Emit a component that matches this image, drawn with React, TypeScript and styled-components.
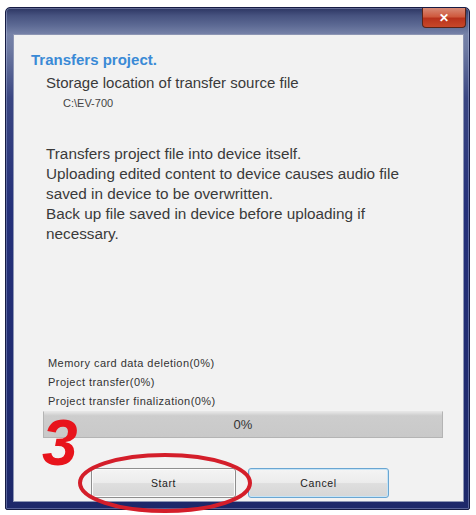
import styled, { createGlobalStyle } from "styled-components";

const GlobalStyle = createGlobalStyle`
  html, body {
    margin: 0;
    padding: 0;
    background: #ffffff;
  }

  body {
    font-family: "Liberation Sans", Arial, sans-serif;
    color: #333333;
  }
`

const Page = styled.div`
  width: 476px;
  height: 515px;
  padding: 7px 6px 0 5px;
  box-sizing: border-box;
`

// frame colour: slate title strip fading into the dark navy side borders
const Window = styled.div`
  position: relative;
  width: 465px;
  height: 503px;
  box-sizing: border-box;
  display: flex;
  flex-direction: column;
  padding: 0 5px 7px 7px;
  border: 1px solid #161c44;
  border-radius: 5px 5px 2px 2px;
  background: linear-gradient(
    to bottom,
    #2c3562 0%,
    #46527f 1.5%,
    #5d6a94 3.5%,
    #7682a8 5.2%,
    #6f7ba3 8%,
    #3a4682 18%,
    #25317a 40%,
    #1d286a 100%
  );
  box-shadow: inset 0 0 0 1px rgba(200, 210, 240, 0.35);
`

const TitleBar = styled.div`
  height: 26px;
  flex-shrink: 0;
  display: flex;
  justify-content: flex-end;
  align-items: flex-start;
`

const CloseButton = styled.div`
  width: 42px;
  height: 19px;
  margin-right: -2px;
  border: 1px solid #5a2418;
  border-top: none;
  border-radius: 0 0 4px 4px;
  display: flex;
  align-items: center;
  justify-content: center;
  color: #ffffff;
  font-size: 12px;
  font-weight: bold;
  background: linear-gradient(to bottom, #d88a76 0%, #cf5a3e 45%, #b8321c 55%, #c8482a 100%);
`

const Client = styled.div`
  flex: 1;
  display: flex;
  flex-direction: column;
  padding: 17px 0 0 17px;
  background: #f2f2f2;
  border: 1px solid #8d96b4;
  box-sizing: border-box;
`

const Heading = styled.div`
  font-size: 15px;
  line-height: 16px;
  font-weight: bold;
  color: #3a8ad6;
`

const Label = styled.div`
  margin: 6px 0 0 15px;
  font-size: 15px;
  line-height: 18px;
  color: #3a3a3a;
`

const FilePath = styled.div`
  margin: 4px 0 0 32px;
  font-size: 11px;
  line-height: 14px;
  color: #444444;
`

const Message = styled.div`
  margin: 34px 0 0 15px;
  font-size: 15.3px;
  line-height: 20px;
  color: #3a3a3a;
`

const Status = styled.div`
  margin: 110px 0 0 17px;
  font-size: 11px;
  line-height: 19px;
  letter-spacing: 0.45px;
  color: #333333;
`

const ProgressBar = styled.div`
  margin: 0 0 0 12px;
  width: 400px;
  height: 27px;
  box-sizing: border-box;
  display: flex;
  align-items: center;
  justify-content: center;
  border: 1px solid #b4b4b4;
  border-top-color: #e6e6e6;
  background: linear-gradient(to bottom, #e4e4e4 0%, #cdcdcd 15%, #c9c9c9 100%);
  font-size: 13px;
  color: #333333;
`

const ButtonRow = styled.div`
  margin: 30px 0 0 60px;
  display: flex;
  gap: 12px;
`

const Button = styled.div<{ $focused?: boolean }>`
  width: ${(p) => (p.$focused ? 141 : 145)}px;
  height: 30px;
  box-sizing: border-box;
  display: flex;
  align-items: center;
  justify-content: center;
  border: 1px solid ${(p) => (p.$focused ? "#6aa6d2" : "#8e8e8e")};
  border-radius: 3px;
  box-shadow: inset 0 0 0 1px ${(p) => (p.$focused ? "#c6e4f6" : "#fbfbfb")};
  background: linear-gradient(to bottom, #f4f4f4 0%, #ececec 48%, #dedede 52%, #d6d6d6 100%);
  font-size: 10.5px;
  letter-spacing: 0.6px;
  color: #222222;
`

const StepNumber = styled.div`
  position: absolute;
  left: 36px;
  top: 403px;
  font-size: 64px;
  line-height: 64px;
  font-weight: bold;
  font-style: italic;
  color: #e8141c;
`

const Highlight = styled.svg`
  position: absolute;
  left: 71px;
  top: 444px;
  overflow: visible;
`

export default function App() {
  return (
    <>
      <GlobalStyle />
      <Page>
        <Window>
          <TitleBar>
            <CloseButton>✕</CloseButton>
          </TitleBar>
          <Client>
            <Heading>Transfers project.</Heading>
            <Label>Storage location of transfer source file</Label>
            <FilePath>C:\EV-700</FilePath>
            <Message>
              Transfers project file into device itself.
              <br />
              Uploading edited content to device causes audio file
              <br />
              saved in device to be overwritten.
              <br />
              Back up file saved in device before uploading if
              <br />
              necessary.
            </Message>
            <Status>
              Memory card data deletion(0%)
              <br />
              Project transfer(0%)
              <br />
              Project transfer finalization(0%)
            </Status>
            <ProgressBar>0%</ProgressBar>
            <ButtonRow>
              <Button>Start</Button>
              <Button $focused>Cancel</Button>
            </ButtonRow>
          </Client>
          <StepNumber>3</StepNumber>
          <Highlight width="176" height="62" viewBox="0 0 176 62">
            <ellipse
              cx="88"
              cy="31"
              rx="85"
              ry="28"
              fill="none"
              stroke="#d41e2a"
              strokeWidth="4"
            />
          </Highlight>
        </Window>
      </Page>
    </>
  );
}
